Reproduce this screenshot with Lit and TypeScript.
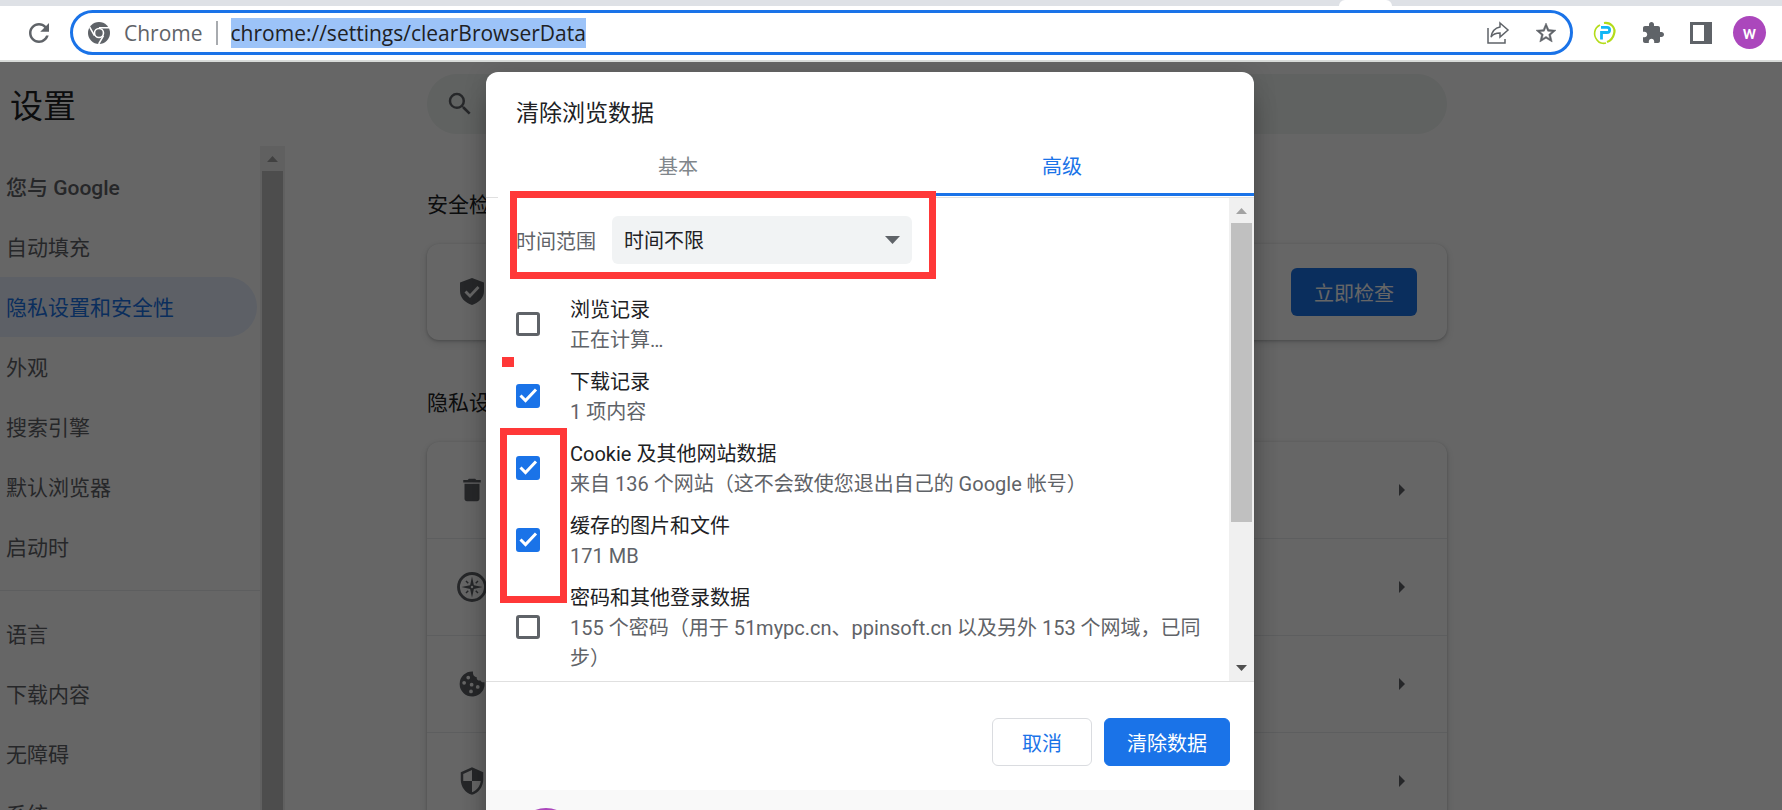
import { LitElement, html, css, svg } from "lit";
import { customElement, property, state } from "lit/decorators.js";

const arrowPath = (d: string) => svg`<path d=${d}/>`;

@customElement("scroll-rail")
class ScrollRail extends LitElement {
  static styles = css`
    :host { display: flex; flex-direction: column; flex: none; width: 25px; background: #f0f0f0; }
    svg { display: block; width: 25px; height: 25px; flex: none; }
    .up { fill: #a3a3a3; }
    .down { fill: #505050; }
    .track { flex: 1; min-height: 0; padding: 0 2px; }
    .thumb { height: var(--thumb, 100%); background: #c0c0c0; }
  `;
  @property({ type: Boolean }) open = false;
  render() {
    return html`
      <svg class="up" viewBox="0 0 25 25">${arrowPath("M7 16L12.5 10 18 16z")}</svg>
      <div class="track"><div class="thumb"></div></div>
      ${this.open ? "" : html`<svg class="down" viewBox="0 0 25 25">${arrowPath("M7 9h11l-5.500 6z")}</svg>`}
    `;
  }
}

@customElement("browser-toolbar")
class BrowserToolbar extends LitElement {
  static styles = css`
    :host { display: block; flex: none; font-family: "Open Sans", "Noto Sans", sans-serif; }
    .strip { height: 6px; background: #dee1e6; display: flex; justify-content: flex-end; }
    .tab { width: 53px; margin-right: 390px; background: #fff; border-radius: 6px 6px 0 0; }
    .bar { display: flex; align-items: center; padding: 4px 16px 5px 24px; background: #fff; border-bottom: 2px solid #d8dbd9; }
    button { border: 0; padding: 0; background: none; display: grid; place-items: center; flex: none; color: #5f6368; }
    svg { display: block; fill: currentColor; }
    .omni { flex: 1; min-width: 0; height: 45px; box-sizing: border-box; margin: 0 20px 0 16px; border: 3px solid #1a73e8; border-radius: 23px; display: flex; align-items: center; padding: 0 12px 0 15px; color: #5f6368; }
    .site { font-size: 21px; line-height: 30px; margin-left: 14px; }
    .rule { width: 2px; height: 24px; background: #a8abaf; margin: 0 13px; }
    .url { field-sizing: content; border: 0; outline: 0; padding: 0; margin: 0; font: inherit; font-size: 21px; line-height: 30px; height: 30px; background: #9cc3f8; color: #202124; }
    .grow { flex: 1; }
    .acts { display: flex; gap: 24px; align-items: center; }
    .tools { display: flex; gap: 24px; align-items: center; }
    .me { width: 33px; height: 33px; border-radius: 50%; background: #ab47bc; color: #fff; font-family: Roboto, sans-serif; font-weight: 500; font-size: 18px; line-height: 33px; margin-left: -4px; }
  `;
  render() {
    return html`
      <div class="strip"><div class="tab"></div></div>
      <div class="bar">
        <button aria-label="重新加载"><svg width="30" height="30" viewBox="0 0 24 24"><path d="M17.650 6.350C16.200 4.900 14.210 4 12 4c-4.420 0-7.990 3.580-7.990 8s3.570 8 7.990 8c3.730 0 6.840-2.550 7.730-6h-2.080c-.82 2.330-3.040 4-5.650 4-3.310 0-6-2.690-6-6s2.690-6 6-6c1.660 0 3.140.69 4.220 1.780L13 11h7V4l-2.350 2.350z"/></svg></button>
        <div class="omni">
          <svg width="22" height="22" viewBox="0 0 22 22">
            <circle cx="11" cy="11" r="11"/>
            <circle cx="11" cy="11" r="4.500" fill="none" stroke="#fff" stroke-width="1.600"/>
            <path d="M11 5.800H21M6.500 13.600L1.700 5.200M15.500 13.600L10.700 22" fill="none" stroke="#fff" stroke-width="1.600"/>
          </svg>
          <span class="site">Chrome</span>
          <span class="rule"></span>
          <input class="url" size="34" aria-label="地址" value="chrome://settings/clearBrowserData">
          <span class="grow"></span>
          <div class="acts">
            <button aria-label="分享"><svg width="24" height="24" viewBox="0 0 24 24"><path d="M2 7v15h17v-4M14 2l8 7-8 7v-4c-4 0-7 1-9 4 1-6 4-9 9-10z" fill="none" stroke="currentColor" stroke-width="1.500"/></svg></button>
            <button aria-label="收藏"><svg width="24" height="24" viewBox="0 0 24 24"><path stroke="currentColor" stroke-width=".5" d="M22 9.240l-7.190-.62L12 2 9.190 8.630 2 9.240l5.460 4.730L5.820 21 12 17.270 18.180 21l-1.630-7.030L22 9.240zM12 15.400l-3.760 2.270 1-4.280-3.320-2.880 4.380-.38L12 6.100l1.710 4.040 4.380.38-3.320 2.880 1 4.280L12 15.400z"/></svg></button>
          </div>
        </div>
        <div class="tools">
          <button aria-label="P 扩展"><svg width="24" height="24" viewBox="0 0 24 24"><g fill="none"><path d="M11 2c7-1 12 5 10 11-1 4-4 7-7 8" stroke="#b4dc19" stroke-width="2.200"/><path d="M7 4C1 7 0 14 4 19c2 3 6 4 9 3" stroke="#b4dc19" stroke-width="1.600"/><path d="M8.500 18.500v-7h5.500a2.600 2.600 0 0 0 0-5.200H8" stroke="#12b7f5" stroke-width="2.800"/></g></svg></button>
          <button aria-label="扩展程序"><svg width="24" height="24" viewBox="0 0 24 24"><path d="M20.500 11H19V7c0-1.100-.9-2-2-2h-4V3.500C13 2.120 11.880 1 10.500 1S8 2.120 8 3.500V5H4c-1.100 0-1.990.9-1.990 2v3.800H3.500c1.490 0 2.700 1.210 2.700 2.700s-1.210 2.700-2.700 2.700H2V20c0 1.100.9 2 2 2h3.800v-1.500c0-1.490 1.210-2.700 2.700-2.700s2.700 1.210 2.700 2.700V22H17c1.100 0 2-.9 2-2v-4h1.500c1.380 0 2.500-1.120 2.500-2.500S21.880 11 20.500 11z"/></svg></button>
          <button aria-label="侧边栏"><svg width="24" height="24" viewBox="0 0 24 24"><path d="M1 1h22v22H1zM4 4v16h11V4z" fill-rule="evenodd"/></svg></button>
          <button class="me" aria-label="个人资料">w</button>
        </div>
      </div>
    `;
  }
}

const NAV_A = ["您与 Google", "自动填充", "隐私设置和安全性", "外观", "搜索引擎", "默认浏览器", "启动时"];
const NAV_B = ["语言", "下载内容", "无障碍", "系统"];

const ROW_ICONS = [
  svg`<path d="M6 19c0 1.100.9 2 2 2h8c1.100 0 2-.9 2-2V7H6v12zM19 4h-3.500l-1-1h-5l-1 1H5v2h14V4z"/>`,
  svg`<circle cx="12" cy="12" r="10.800" fill="none" stroke="currentColor" stroke-width="2.300"/><path d="M12 3.500l1.500 7 7 1.500-7 1.500-1.500 7-1.500-7-7-1.500 7-1.500z"/><path d="M7.200 7.200l1.800 1.800M16.800 7.200L15 9M7.200 16.800L9 15M16.800 16.800L15 15" stroke="currentColor" stroke-width="1.200"/><circle cx="12" cy="12" r="1" fill="#fff"/>`,
  svg`<path fill-rule="evenodd" d="M12.800 2A10 10 0 1 0 22 10.500c-1.500.4-2.800-.1-3.200-1.300-2 .3-3.300-.9-3-2.700C13.600 6.400 12.500 4.400 12.800 2zM9 5.300a1.500 1.500 0 1 1 0 3 1.500 1.500 0 0 1 0-3zM5.700 9.500a1.500 1.500 0 1 1 0 3 1.500 1.500 0 0 1 0-3zM11.700 11a1.500 1.500 0 1 1 0 3 1.500 1.500 0 0 1 0-3zM16.600 12.800a1.500 1.500 0 1 1 0 3 1.500 1.500 0 0 1 0-3zM11.200 16.400a1.500 1.500 0 1 1 0 3 1.500 1.500 0 0 1 0-3z"/>`,
  svg`<path d="M12 1L3 5v6c0 5.550 3.840 10.740 9 12 5.160-1.260 9-6.450 9-12V5l-9-4zm0 10.990h7c-.53 4.120-3.280 7.790-7 8.940V12H5V6.300l7-3.110v8.800z"/>`,
];

@customElement("settings-page")
class SettingsPage extends LitElement {
  static styles = css`
    :host { display: flex; height: 100%; background: #fff; color: #202124; }
    .side { width: 285px; flex: none; display: flex; flex-direction: column; }
    h1 { font-size: 33px; line-height: 48px; font-weight: 400; margin: 0; padding: 21px 0 15px 10px; }
    .scroll { flex: 1; min-height: 0; display: flex; overflow: hidden; }
    nav { flex: 1; padding-top: 11px; }
    nav a { display: block; height: 60px; margin-right: 3px; padding-left: 6px; font-size: 21px; line-height: 62px; color: #5f6368; text-decoration: none; }
    nav a.on { background: #e8f0fe; color: #1a73e8; border-radius: 0 30px 30px 0; }
    nav a.first { font-weight: 500; }
    hr { margin: 13px 0; border: 0; border-top: 1px solid #e8eaed; }
    main { flex: 1; min-width: 0; padding: 12px 24px 0 142px; }
    .col { max-width: 1020px; }
    .search { display: flex; align-items: center; height: 60px; border-radius: 30px; background: #eff4f2; padding: 0 18px; color: #5f6368; }
    .search input { flex: 1; border: 0; background: none; outline: 0; font: inherit; font-size: 20px; }
    svg { display: block; fill: currentColor; flex: none; overflow: visible; }
    h2 { font-size: 21px; line-height: 30px; font-weight: 400; margin: 0; padding: 56px 0 24px; }
    h2.next { padding: 48px 0 24px; }
    .card { border-radius: 12px; background: #fff; box-shadow: 0 1px 3px rgba(60, 64, 67, .3), 0 3px 9px rgba(60, 64, 67, .15); }
    .safety { display: flex; align-items: center; justify-content: space-between; height: 96px; padding: 0 30px; color: #5f6368; }
    .safety button { height: 48px; padding: 0 23px; border: 0; border-radius: 6px; background: #1a73e8; color: #fff; font: inherit; font-size: 20px; }
    .row { display: flex; align-items: center; justify-content: space-between; height: 97px; box-sizing: border-box; padding: 0 36px 0 30px; border-bottom: 1px solid #e8eaed; color: #5f6368; }
  `;
  render() {
    return html`
      <div class="side">
        <h1>设置</h1>
        <div class="scroll">
          <nav>
            ${NAV_A.map((t, i) => html`<a href="#" class=${i === 2 ? "on" : i === 0 ? "first" : ""}>${t}</a>`)}
            <hr>
            ${NAV_B.map((t) => html`<a href="#">${t}</a>`)}
          </nav>
          <scroll-rail open></scroll-rail>
        </div>
      </div>
      <main>
        <div class="col">
          <div class="search">
            <svg width="30" height="30" viewBox="0 0 24 24"><path d="M15.500 14h-.79l-.28-.27A6.471 6.471 0 0 0 16 9.500 6.500 6.500 0 1 0 9.500 16c1.610 0 3.090-.59 4.230-1.570l.27.28v.79l5 4.990L20.490 19l-4.990-5zm-6 0C7.010 14 5 11.990 5 9.500S7.010 5 9.500 5 14 7.010 14 9.500 11.990 14 9.500 14z"/></svg>
            <input aria-label="搜索设置">
          </div>
          <h2>安全检查</h2>
          <div class="card safety">
            <svg width="30" height="30" viewBox="0 0 30 30"><path fill-rule="evenodd" d="M15 1L3 5.500V14c0 7 5 11.500 12 14 7-2.500 12-7 12-14V5.500zM13 21l-5.500-5.500 2-2L13 17l7.500-8 2 2z"/></svg>
            <button>立即检查</button>
          </div>
          <h2 class="next">隐私设置和安全性</h2>
          <div class="card">
            ${ROW_ICONS.map((ic) => html`<div class="row">
              <svg width="30" height="30" viewBox="0 0 24 24">${ic}</svg>
              <svg width="18" height="18" viewBox="0 0 18 18"><path d="M6 3l6 6-6 6z"/></svg>
            </div>`)}
          </div>
        </div>
      </main>
    `;
  }
}

interface Item { title: string; detail: string; on: boolean; }

@customElement("clear-data-dialog")
class ClearDataDialog extends LitElement {
  static styles = css`
    :host { display: block; width: 768px; max-width: 100%; flex: none; position: relative; }
    .box { background: #fff; border-radius: 12px; box-shadow: 0 0 24px rgba(0, 0, 0, .12), 0 24px 24px rgba(0, 0, 0, .24); color: #202124; }
    h2 { margin: 0; padding: 27px 30px 13px; font-size: 23px; line-height: 30px; font-weight: 400; }
    .tabs { display: flex; border-bottom: 1px solid #e0e0e0; padding-bottom: 1px; }
    .tabs button { flex: 1; height: 54px; padding: 0 0 5px; border: 0; border-bottom: 3px solid transparent; background: none; font: inherit; font-size: 20px; color: #80868b; }
    .tabs button.on { color: #1a73e8; border-bottom-color: #1a73e8; }
    .body { display: flex; border-bottom: 1px solid #e0e0e0; }
    .list { flex: 1; min-width: 0; padding: 18px 24px 3px 30px; }
    scroll-rail { --thumb: 69%; }
    .range { display: flex; align-items: center; margin-bottom: 24px; font-size: 20px; }
    .range label { width: 96px; color: #5f6368; }
    .pick { display: grid; align-items: center; width: 300px; }
    .pick > * { grid-area: 1 / 1; }
    .pick svg { justify-self: end; margin-right: 12px; fill: #5f6368; pointer-events: none; }
    select { appearance: none; width: 100%; height: 48px; border: 0; border-radius: 6px; background: #f1f3f4; padding: 2px 36px 0 12px; font: inherit; color: #202124; }
    .item { display: flex; align-items: center; padding: 5px 0; font-size: 20px; line-height: 30px; }
    .item label { padding-top: 2px; }
    .check { display: grid; flex: none; margin-right: 30px; }
    .check > * { grid-area: 1 / 1; }
    .check input { appearance: none; width: 24px; height: 24px; margin: 0; border: 3px solid #5f6368; border-radius: 3px; }
    .check input:checked { background: #1a73e8; border-color: #1a73e8; }
    .check svg { pointer-events: none; fill: none; stroke: #fff; stroke-width: 3; }
    .check input:not(:checked) + svg { visibility: hidden; }
    .detail { color: #5f6368; }
    .foot { display: flex; justify-content: flex-end; gap: 12px; padding: 36px 24px 24px; }
    .foot button { height: 48px; border-radius: 6px; border: 1px solid #dadce0; background: #fff; color: #1a73e8; font: inherit; font-size: 20px; padding: 0 29px; }
    .foot button.go { background: #1a73e8; border-color: #1a73e8; color: #fff; padding: 0 22px; }
    .account { background: #f9f9f9; padding: 18px 30px; border-radius: 0 0 12px 12px; }
    .face { width: 60px; height: 60px; border-radius: 50%; background: #ab47bc; }
    .mark { position: absolute; box-sizing: border-box; border: 7px solid #ff3838; pointer-events: none; }
    .m1 { left: 24px; top: 119px; width: 426px; height: 88px; }
    .m2 { left: 14px; top: 356px; width: 67px; height: 175px; }
    .dot { left: 16px; top: 285px; width: 12px; height: 10px; border: 0; background: #ff3838; }
    .gap { left: 12px; top: 124px; width: 12px; height: 3px; border: 0; background: #fff; }
  `;
  @state() items: Item[] = [
    { title: "浏览记录", detail: "正在计算…", on: false },
    { title: "下载记录", detail: "1 项内容", on: true },
    { title: "Cookie 及其他网站数据", detail: "来自 136 个网站（这不会致使您退出自己的 Google 帐号）", on: true },
    { title: "缓存的图片和文件", detail: "171 MB", on: true },
    { title: "密码和其他登录数据", detail: "155 个密码（用于 51mypc.cn、ppinsoft.cn 以及另外 153 个网域，已同步）", on: false },
  ];
  render() {
    return html`
      <div class="box">
        <h2>清除浏览数据</h2>
        <div class="tabs"><button>基本</button><button class="on">高级</button></div>
        <div class="body">
          <div class="list">
            <div class="range">
              <label for="range">时间范围</label>
              <div class="pick">
                <select id="range"><option>时间不限</option></select>
                <svg width="15" height="8" viewBox="0 0 15 8"><path d="M0 0h15L7.500 8z"/></svg>
              </div>
            </div>
            ${this.items.map((it, i) => html`<div class="item">
              <span class="check">
                <input type="checkbox" id=${"c" + i} .checked=${it.on}>
                <svg width="24" height="24" viewBox="0 0 24 24"><path d="M4.500 11.500l5 5L20 5.500"/></svg>
              </span>
              <label for=${"c" + i}><div>${it.title}</div><div class="detail">${it.detail}</div></label>
            </div>`)}
          </div>
          <scroll-rail></scroll-rail>
        </div>
        <div class="foot"><button>取消</button><button class="go">清除数据</button></div>
        <div class="account"><div class="face"></div></div>
      </div>
      <div class="mark gap"></div>
      <div class="mark m1"></div>
      <div class="mark dot"></div>
      <div class="mark m2"></div>
    `;
  }
}

@customElement("app-root")
class AppRoot extends LitElement {
  static styles = css`
    :host { display: flex; flex-direction: column; height: 100vh; overflow: hidden; font-family: Roboto, "Noto Sans CJK SC", sans-serif; }
    .view { flex: 1; min-height: 0; position: relative; overflow: hidden; }
    .shade { position: absolute; inset: 0; background: rgba(0, 0, 0, .6); display: flex; justify-content: center; align-items: flex-start; padding: 10px 42px 0 0; overflow: hidden; }
  `;
  render() {
    return html`
      <browser-toolbar></browser-toolbar>
      <div class="view">
        <settings-page></settings-page>
        <div class="shade"><clear-data-dialog></clear-data-dialog></div>
      </div>
    `;
  }
}
